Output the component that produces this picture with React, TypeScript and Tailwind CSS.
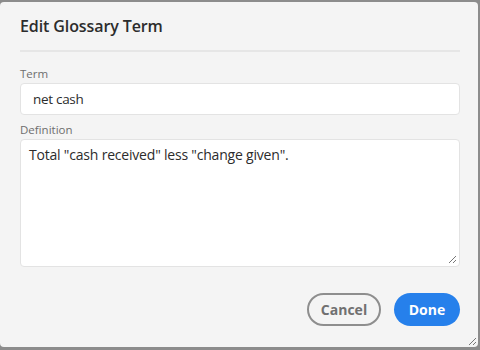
import React from "react";

export default function App() {
  return (
    <div
      className="w-[480px] h-[350px] bg-[#8c8c8c] pt-[2px] pb-[3px] overflow-hidden"
      style={{ fontFamily: '"Open Sans", "Noto Sans", sans-serif' }}
    >
      <div className="relative h-full w-[478px] rounded-[4px] bg-[#f4f4f4] pl-5 pr-[18px] pt-[13px]">
        <h1 className="text-[16px] leading-[22px] font-semibold text-[#2c2c2c] tracking-[-0.1px]">
          Edit Glossary Term
        </h1>
        <div className="mt-[13px] h-[2px] bg-[#e6e6e6]" />
        <div className="mt-[14px] text-[11.5px] leading-[16px] text-[#6e6e6e]">Term</div>
        <div className="mt-[1px] h-[32px] rounded-[4px] border border-[#e3e3e3] bg-white flex items-center pl-[12px] text-[13.5px] tracking-[-0.3px] text-[#2c2c2c]">
          net cash
        </div>
        <div className="mt-[7px] text-[11.5px] leading-[16px] text-[#6e6e6e]">Definition</div>
        <div className="relative mt-[1px] h-[128px] rounded-[4px] border border-[#e3e3e3] bg-white pl-[8px] pt-[5px] text-[14px] leading-[20px] tracking-[-0.2px] text-[#2c2c2c]">
          Total "cash received" less "change given".
          <svg className="absolute right-[2px] bottom-[2px]" width="9" height="9" viewBox="0 0 9 9">
            <line x1="1" y1="8" x2="8" y2="1" stroke="#777" strokeWidth="1" />
            <line x1="5" y1="8" x2="8" y2="5" stroke="#777" strokeWidth="1" />
          </svg>
        </div>
        <div className="mt-[26px] flex justify-end gap-[13px]">
          <button className="h-[33px] w-[74px] rounded-full border-2 border-[#8e8e8e] text-[14px] font-bold text-[#707070]">
            Cancel
          </button>
          <button className="h-[33px] w-[66px] rounded-full bg-[#2680eb] text-[14px] font-bold text-white">
            Done
          </button>
        </div>
        <svg className="absolute right-[1px] bottom-[1px]" width="9" height="9" viewBox="0 0 9 9">
          <line x1="1" y1="8" x2="8" y2="1" stroke="#777" strokeWidth="1" />
          <line x1="5" y1="8" x2="8" y2="5" stroke="#777" strokeWidth="1" />
        </svg>
      </div>
    </div>
  );
}
